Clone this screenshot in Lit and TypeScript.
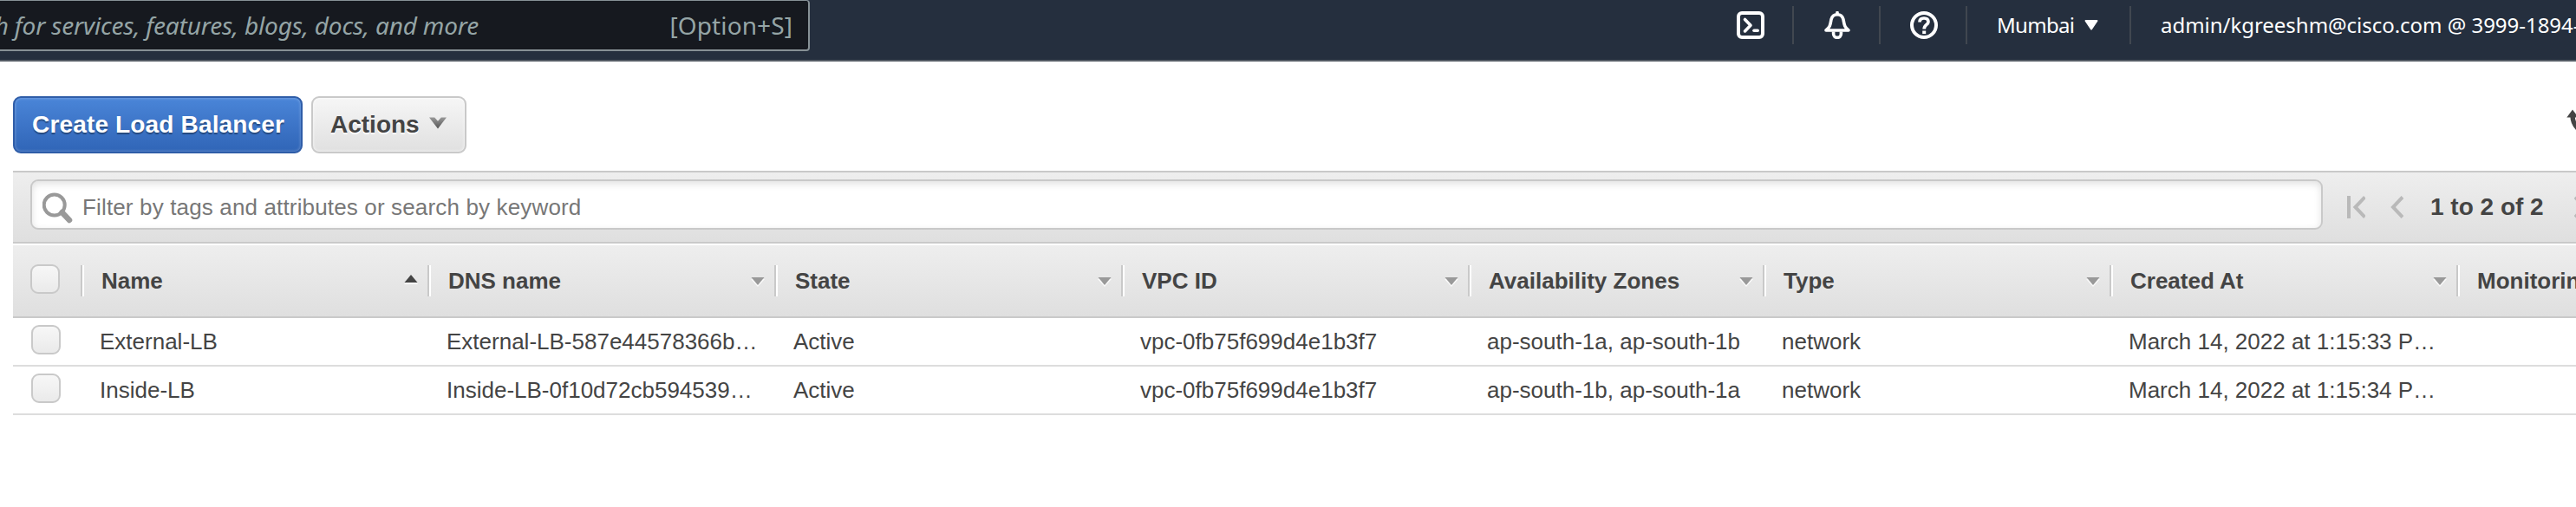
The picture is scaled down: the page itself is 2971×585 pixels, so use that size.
import { LitElement, html, css, nothing } from "lit";
import { customElement } from "lit/decorators.js";

interface Column {
  key: string;
  label: string;
  sort?: "up" | "down";
}

const COLUMNS: Column[] = [
  { key: "name", label: "Name", sort: "up" },
  { key: "dns", label: "DNS name", sort: "down" },
  { key: "state", label: "State", sort: "down" },
  { key: "vpc", label: "VPC ID", sort: "down" },
  { key: "zones", label: "Availability Zones", sort: "down" },
  { key: "type", label: "Type", sort: "down" },
  { key: "created", label: "Created At", sort: "down" },
  { key: "monitoring", label: "Monitoring" },
];

const ROWS: Record<string, string>[] = [
  {
    name: "External-LB",
    dns: "External-LB-587e44578366b…",
    state: "Active",
    vpc: "vpc-0fb75f699d4e1b3f7",
    zones: "ap-south-1a, ap-south-1b",
    type: "network",
    created: "March 14, 2022 at 1:15:33 P…",
  },
  {
    name: "Inside-LB",
    dns: "Inside-LB-0f10d72cb594539…",
    state: "Active",
    vpc: "vpc-0fb75f699d4e1b3f7",
    zones: "ap-south-1b, ap-south-1a",
    type: "network",
    created: "March 14, 2022 at 1:15:34 P…",
  },
];

@customElement("console-nav")
export class ConsoleNav extends LitElement {
  static styles = css`
    :host {
      display: flex;
      box-sizing: border-box;
      height: 71px;
      padding-bottom: 11px;
      border-bottom: 2px solid #545b64;
      background: #252f3e;
      color: #fff;
      font: 24px/58px "Noto Sans", "Open Sans", sans-serif;
      white-space: nowrap;
      overflow: hidden;
    }
    .search {
      display: flex;
      flex: none;
      box-sizing: border-box;
      width: 934px;
      height: 59px;
      border: solid #879196;
      border-width: 1px 2px 2px 0;
      border-radius: 0 4px 4px 0;
      background: #16191f;
      color: #95a5a6;
      font-size: 28px;
      line-height: 56px;
    }
    .placeholder {
      display: flex;
      justify-content: flex-end;
      width: 552px;
      font-style: italic;
      letter-spacing: -0.17px;
    }
    .hint {
      margin-left: auto;
      padding-right: 18px;
      letter-spacing: 0.1px;
    }
    .tools {
      display: flex;
      margin-left: 1035px;
      padding-top: 7px;
      height: 44px;
      line-height: 44px;
    }
    .tool {
      display: flex;
      flex: none;
      align-items: center;
      box-sizing: border-box;
      width: 100px;
      padding-left: 34px;
      border-right: 2px solid #414750;
    }
    .region {
      width: 189px;
      padding-left: 34px;
      letter-spacing: -0.7px;
    }
    .caret {
      margin-left: 12px;
    }
    .account {
      padding-left: 34px;
      letter-spacing: -0.03px;
    }
    svg {
      display: block;
      flex: none;
    }
  `;

  render() {
    return html`
      <div class="search">
        <span class="placeholder">Search for services, features, blogs, docs, and more</span>
        <span class="hint">[Option+S]</span>
      </div>
      <div class="tools">
        <div class="tool">
          <svg width="32" height="32" viewBox="0 0 32 32" fill="none" stroke="#fff" stroke-width="4">
            <rect x="2" y="2" width="28" height="28" rx="4" />
            <path d="M9.5 9.5l6.500 6.700-6.500 6.700" stroke-width="3.600" stroke-linecap="round" stroke-linejoin="round" />
            <path d="M20 22.200h4.200" stroke-linecap="round" stroke-width="3.600" />
          </svg>
        </div>
        <div class="tool">
          <svg width="32" height="32" viewBox="0 0 32 32" fill="none" stroke="#fff" stroke-width="3.600" stroke-linejoin="round">
            <path d="M16 1.500v2" stroke-linecap="round" />
            <path d="M3 22C8 18 8 15 9 9.500C10 5.500 12.500 3.800 16 3.800S22 5.500 23 9.500C24 15 24 18 29 22Z" />
            <path d="M11.600 23.500v2.500a4.400 4.400 0 0 0 8.800 0v-2.500" />
          </svg>
        </div>
        <div class="tool">
          <svg width="32" height="32" viewBox="0 0 32 32" fill="none" stroke="#fff" stroke-width="4">
            <circle cx="16" cy="16" r="14" />
            <path d="M11 12.500C11 9.500 13 8 16 8s5 1.500 5 4.300C21 15.500 16.200 15.600 16.200 20.400" stroke-width="3.700" />
            <path d="M14.200 24.300h4" stroke-width="3.600" />
          </svg>
        </div>
        <div class="tool region">
          Mumbai
          <svg class="caret" width="16" height="12" viewBox="0 0 16 12"><path d="M1.500 0h13a.9.9 0 0 1 .8 1.400L8.900 11a1.200 1.200 0 0 1-1.800 0L.7 1.400A.9.9 0 0 1 1.500 0z" fill="#fff" /></svg>
        </div>
        <div class="account">admin/kgreeshm@cisco.com @ 3999-1894-</div>
      </div>
    `;
  }
}

@customElement("action-bar")
export class ActionBar extends LitElement {
  static styles = css`
    :host {
      display: flex;
      height: 66px;
      padding: 40px 0 20px 15px;
      overflow: hidden;
    }
    .button {
      display: flex;
      flex: none;
      align-items: center;
      box-sizing: border-box;
      height: 66px;
      border: 2px solid;
      border-radius: 9px;
      font: bold 28px/62px "Liberation Sans", Arial, sans-serif;
      white-space: nowrap;
    }
    .primary {
      width: 334px;
      padding-left: 20px;
      border-color: #2f5da8;
      background: linear-gradient(#4a85d8, #3065b7);
      box-shadow: inset 0 0 3px 1px rgba(255, 255, 255, 0.2);
      color: #fff;
      letter-spacing: 0.16px;
      text-shadow: 0 2px 1px rgba(0, 0, 0, 0.35);
    }
    .secondary {
      width: 179px;
      margin-left: 10px;
      padding-left: 20px;
      border-color: #c9c9c9;
      background: linear-gradient(#f6f6f6, #e0e0e0);
      box-shadow: inset 0 0 3px 1px rgba(255, 255, 255, 0.5);
      color: #444;
      text-shadow: 0 2px 0 #fff;
    }
    .chevron {
      margin: -5px 0 0 11px;
    }
    .refresh {
      flex: none;
      margin: 14px 0 0 auto;
      width: 11px;
      height: 40px;
      overflow: hidden;
    }
    svg {
      display: block;
    }
  `;

  render() {
    return html`
      <div class="button primary">Create Load Balancer</div>
      <div class="button secondary">
        Actions
        <svg class="chevron" width="20" height="15" viewBox="0 0 20 15">
          <defs>
            <linearGradient id="shade" x1="0" y1="0" x2="0" y2="1">
              <stop offset="0" stop-color="#999" />
              <stop offset="1" stop-color="#555" />
            </linearGradient>
          </defs>
          <path d="M0 1.500h6.200L10 5.800l3.800-4.300h6.200L10 14.500z" fill="url(#shade)" />
        </svg>
      </div>
      <div class="refresh">
        <svg width="40" height="36" viewBox="0 0 40 36">
          <path d="M0.300 10.500L7 1.500L14 10.500Z" fill="#444" />
          <path d="M7 8C7 15 9 20 15 25" fill="none" stroke="#444" stroke-width="5.400" />
        </svg>
      </div>
    `;
  }
}

@customElement("filter-bar")
export class FilterBar extends LitElement {
  static styles = css`
    :host {
      display: flex;
      align-items: flex-start;
      box-sizing: border-box;
      height: 84px;
      padding: 8px 0 0 20px;
      border: solid #c9c9c9;
      border-width: 2px 0;
      background: linear-gradient(#eee, #dfdfdf);
      white-space: nowrap;
      overflow: hidden;
    }
    .field {
      display: flex;
      flex: none;
      box-sizing: border-box;
      width: 2644px;
      height: 58px;
      padding: 2px 0 0 12px;
      border: 2px solid #c9c9c9;
      border-radius: 9px;
      background: #fff;
      box-shadow: inset 0 3px 8px rgba(0, 0, 0, 0.12);
      color: #777;
      font: 26px/56px "Liberation Sans", Arial, sans-serif;
      letter-spacing: 0.15px;
    }
    .lens {
      flex: none;
      margin: 11px 11px 0 0;
    }
    .pager {
      display: flex;
      flex: none;
      align-items: center;
      height: 64px;
      padding-left: 28px;
      color: #444;
      font: bold 28px/64px "Liberation Sans", Arial, sans-serif;
    }
    .previous {
      margin-left: 29px;
    }
    .count {
      width: 166px;
      padding-left: 31px;
    }
    svg {
      display: block;
      flex: none;
    }
  `;

  render() {
    return html`
      <div class="field">
        <svg class="lens" width="35" height="36" viewBox="0 0 35 36" fill="none" stroke="#999">
          <circle cx="13.700" cy="14.500" r="12" stroke-width="4" />
          <path d="M22.500 23l8.500 9" stroke-width="6.500" stroke-linecap="round" />
        </svg>
        Filter by tags and attributes or search by keyword
      </div>
      <div class="pager">
        <svg width="21" height="26" viewBox="0 0 21 26" fill="none" stroke="#b9b9b9" stroke-width="4">
          <path d="M2 0v26M20.500 1.500L9.500 13l11 11.500" />
        </svg>
        <svg class="previous" width="15" height="26" viewBox="0 0 15 26" fill="none" stroke="#b9b9b9" stroke-width="4">
          <path d="M14 1.500L3 13l11 11.500" />
        </svg>
        <span class="count">1 to 2 of 2</span>
        <svg width="15" height="26" viewBox="0 0 15 26" fill="none" stroke="#b9b9b9" stroke-width="4">
          <path d="M1 1.500L12 13L1 24.500" />
        </svg>
      </div>
    `;
  }
}

@customElement("balancer-table")
export class BalancerTable extends LitElement {
  static styles = css`
    :host {
      display: block;
      padding-top: 2px;
      color: #444;
      font: 26px "Liberation Sans", Arial, sans-serif;
      white-space: nowrap;
      overflow: hidden;
    }
    .line {
      display: grid;
      grid-template-columns: 78px repeat(4, 400px) 340px 400px 400px 400px;
      align-items: center;
      height: 54px;
      border-bottom: 2px solid #ddd;
    }
    .head {
      height: 82px;
      border-color: #c9c9c9;
      background: linear-gradient(#eee, #dfdfdf);
      font-weight: bold;
    }
    .box {
      box-sizing: border-box;
      width: 34px;
      height: 34px;
      margin: 0 0 4px 21px;
      border: 2px solid #c9c9c9;
      border-radius: 9px;
      background: linear-gradient(#f7f7f7, #eaeaea);
    }
    .head .box {
      margin-left: 20px;
    }
    .title {
      display: flex;
      align-items: center;
      box-sizing: border-box;
      height: 36px;
      padding: 0 11px 0 20px;
      border-left: 2px solid #c9c9c9;
      box-shadow: inset 2px 0 #fff;
      text-indent: 2px;
    }
    .sort {
      margin-left: auto;
    }
    .up {
      margin-bottom: 4px;
    }
    .down {
      margin-top: 2px;
    }
    .cell {
      padding-left: 22px;
    }
  `;

  private renderSort(direction?: "up" | "down") {
    if (!direction) return nothing;
    return direction === "up"
      ? html`<svg class="sort up" width="16" height="11" viewBox="0 0 16 11"><path d="M0 11L8 2l8 9z" fill="#fff" /><path d="M.5 9L8 0l7.500 9z" fill="#444" /></svg>`
      : html`<svg class="sort down" width="16" height="11" viewBox="0 0 16 11"><path d="M0 2h16L8 11z" fill="#fff" opacity=".8" /><path d="M.5 0h15L8 9z" fill="#999" /></svg>`;
  }

  render() {
    return html`
      <div class="line head">
        <span class="box"></span>
        ${COLUMNS.map((c) => html`<div class="title">${c.label}${this.renderSort(c.sort)}</div>`)}
      </div>
      ${ROWS.map(
        (row) => html`<div class="line">
          <span class="box"></span>
          ${COLUMNS.map((c) => html`<div class="cell">${row[c.key] ?? ""}</div>`)}
        </div>`,
      )}
    `;
  }
}

@customElement("app-root")
export class AppRoot extends LitElement {
  static styles = css`
    :host {
      display: block;
      height: 585px;
      background: #fff;
      overflow: hidden;
    }
    .panel {
      margin-left: 15px;
    }
  `;

  render() {
    return html`
      <console-nav></console-nav>
      <action-bar></action-bar>
      <div class="panel">
        <filter-bar></filter-bar>
        <balancer-table></balancer-table>
      </div>
    `;
  }
}
